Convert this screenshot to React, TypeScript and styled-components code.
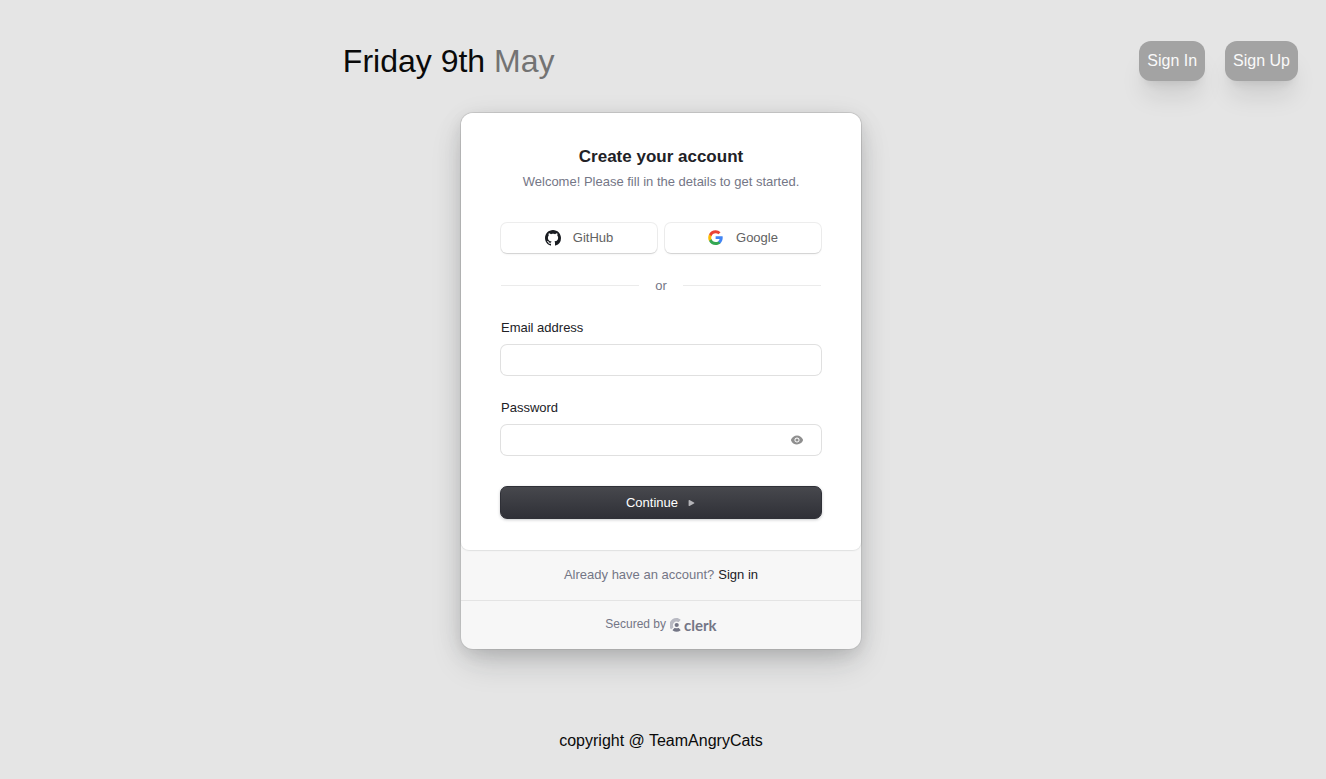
import React from "react";
import styled, { createGlobalStyle } from "styled-components";

const GlobalStyle = createGlobalStyle`
  *, *::before, *::after { box-sizing: border-box; }
  body {
    margin: 0;
    background: #e5e5e5;
    color: #0a0a0a;
    font-family: "Liberation Sans", Arial, sans-serif;
    font-size: 16px;
    line-height: 24px;
  }
  button, input { font: inherit; }
  h1, h2, p { margin: 0; }
`;

const Page = styled.div`
  display: flex;
  flex-direction: column;
  min-height: 100vh;
  padding-right: 4px;
`;

const Header = styled.header`
  display: grid;
  grid-template-columns: 2fr 1fr;
  align-items: center;
  padding: 41px 24px 32px;
`;

const DateTitle = styled.h1`
  text-align: center;
  font-size: 32px;
  line-height: 40px;
  font-weight: 400;
`;

const Month = styled.span`
  color: #737373;
`;

const HeaderActions = styled.nav`
  display: flex;
  justify-content: flex-end;
  gap: 20px;
`;

const HeaderButton = styled.button`
  padding: 8px;
  border: 0;
  border-radius: 12px;
  background: #a3a3a3;
  color: #fafafa;
  cursor: pointer;
  box-shadow: 0 20px 25px -5px rgba(0, 0, 0, 0.1), 0 8px 10px -6px rgba(0, 0, 0, 0.1);
`;

const Main = styled.main`
  display: flex;
  justify-content: center;
`;

const Card = styled.section`
  width: 100%;
  max-width: 400px;
  border-radius: 12px;
  background: #f7f7f7;
  color: #747686;
  font-size: 13px;
  line-height: 18px;
  box-shadow: 0 5px 15px rgba(0, 0, 0, 0.08), 0 15px 35px -5px rgba(25, 28, 33, 0.2),
    0 4px 32px rgba(0, 0, 0, 0.05), 0 0 0 1px rgba(0, 0, 0, 0.06);
`;

const CardBody = styled.form`
  display: flex;
  flex-direction: column;
  padding: 32px 40px;
  border-radius: 12px 12px 8px 8px;
  background: #fff;
  box-shadow: 0 1px 2px rgba(25, 28, 33, 0.06), 0 0 0 1px rgba(0, 0, 0, 0.04);
`;

const Intro = styled.div`
  display: flex;
  flex-direction: column;
  gap: 4px;
  margin-bottom: 32px;
  text-align: center;
`;

const CardTitle = styled.h2`
  color: #212126;
  font-size: 17px;
  line-height: 24px;
  font-weight: 700;
`;

const Providers = styled.div`
  display: grid;
  grid-template-columns: 1fr 1fr;
  gap: 8px;
`;

const ProviderButton = styled.button`
  display: flex;
  align-items: center;
  justify-content: center;
  gap: 12px;
  height: 30px;
  padding: 0 12px;
  border: 0;
  border-radius: 6px;
  background: #fff;
  color: #626262;
  cursor: pointer;
  box-shadow: 0 0 0 1px rgba(0, 0, 0, 0.07), 0 1px 0 rgba(0, 0, 0, 0.05),
    0 2px 3px -1px rgba(0, 0, 0, 0.08);
`;

const Divider = styled.div`
  display: flex;
  align-items: center;
  gap: 16px;
  margin: 24px 0;

  &::before, &::after {
    content: "";
    flex: 1;
    height: 2px;
    border-top: 1px solid #ebebeb;
  }
`;

const Field = styled.div`
  display: flex;
  flex-direction: column;
  gap: 8px;
  margin-bottom: 24px;
`;

const Label = styled.label`
  color: #212126;
`;

const InputFrame = styled.div`
  display: flex;
  align-items: center;
  height: 30px;
  padding-right: 4px;
  border-radius: 6px;
  background: #fff;
  box-shadow: 0 0 0 1px rgba(0, 0, 0, 0.12);
`;

const Input = styled.input`
  flex: 1;
  min-width: 0;
  height: 30px;
  padding: 0 12px;
  border: 0;
  background: transparent;
  color: #212126;
  outline: none;
`;

const RevealButton = styled.button`
  display: flex;
  align-items: center;
  justify-content: center;
  width: 40px;
  height: 24px;
  padding: 0;
  border: 0;
  background: transparent;
  color: #8f8f8f;
  cursor: pointer;
`;

const SubmitButton = styled.button`
  display: flex;
  align-items: center;
  justify-content: center;
  gap: 8px;
  height: 33px;
  margin: 7px -1px -1px;
  border: 1px solid #2f3037;
  border-radius: 7px;
  background: linear-gradient(#47484d, #2f3037);
  color: #fff;
  font-weight: 500;
  cursor: pointer;
  box-shadow: 0 1px 3px rgba(34, 42, 53, 0.25);
`;

const FooterRow = styled.div<{ $divided?: boolean }>`
  display: flex;
  align-items: center;
  justify-content: center;
  gap: 4px;
  padding: ${(p) => (p.$divided ? "14px 32px 16px" : "16px 32px")};
  border-top: ${(p) => (p.$divided ? "1px solid #e4e4e4" : "0")};
`;

const SignInLink = styled.a`
  color: #212126;
  text-decoration: none;
`;

const Secured = styled.span`
  font-size: 12px;
`;

const Brand = styled.a`
  display: flex;
  align-items: center;
  gap: 2px;
  padding-top: 2px;
  color: #747686;
  font-family: Lato, sans-serif;
  font-size: 15px;
  line-height: 16px;
  font-weight: 700;
  text-decoration: none;
`;

const Copyright = styled.footer`
  padding: 80px 24px 24px;
  text-align: center;
`;

const GitHubIcon = () => (
  <svg width="16" height="16" viewBox="0 0 16 16" fill="#191c21" aria-hidden="true">
    <path d="M8 0C3.58 0 0 3.58 0 8c0 3.54 2.29 6.53 5.47 7.59.4.07.55-.17.55-.38 0-.19-.01-.82-.01-1.49-2.01.37-2.53-.49-2.69-.94-.09-.23-.48-.94-.82-1.13-.28-.15-.68-.52-.01-.53.63-.01 1.08.58 1.23.82.72 1.21 1.87.87 2.33.66.07-.52.28-.87.51-1.07-1.78-.2-3.64-.89-3.64-3.95 0-.87.31-1.59.82-2.15-.08-.2-.36-1.02.08-2.12 0 0 .67-.21 2.2.82.64-.18 1.32-.27 2-.27s1.36.09 2 .27c1.53-1.04 2.2-.82 2.2-.82.44 1.1.16 1.92.08 2.12.51.56.82 1.27.82 2.15 0 3.07-1.87 3.75-3.65 3.95.29.25.54.73.54 1.48 0 1.07-.01 1.93-.01 2.2 0 .21.15.46.55.38A8.01 8.01 0 0 0 16 8c0-4.42-3.58-8-8-8Z" />
  </svg>
);

const GoogleIcon = () => (
  <svg width="16" height="16" viewBox="-0.4 -0.4 26 26" aria-hidden="true">
    <path fill="#4285f4" d="M23.5 12.27c0-.82-.07-1.6-.2-2.36H12v4.51h6.46a5.52 5.52 0 0 1-2.4 3.58v3h3.86c2.26-2.09 3.58-5.17 3.58-8.73Z" />
    <path fill="#34a853" d="M12 24c3.24 0 5.95-1.08 7.93-2.91l-3.86-3c-1.08.72-2.45 1.16-4.07 1.16-3.13 0-5.78-2.11-6.73-4.96H1.28v3.09A12 12 0 0 0 12 24Z" />
    <path fill="#fbbc05" d="M5.27 14.29a7.2 7.2 0 0 1 0-4.58V6.62H1.28a12 12 0 0 0 0 10.76l3.99-3.09Z" />
    <path fill="#ea4335" d="M12 4.75c1.77 0 3.35.61 4.6 1.8l3.42-3.42A11.5 11.5 0 0 0 12 0 12 12 0 0 0 1.28 6.62l3.99 3.09C6.22 6.86 8.87 4.75 12 4.75Z" />
  </svg>
);

const EyeIcon = () => (
  <svg width="16" height="16" viewBox="0 0 16 16" fill="currentColor" aria-hidden="true">
    <circle cx="8" cy="8" r="1.6" />
    <path
      fillRule="evenodd"
      d="M2.07 8.38a.962.962 0 0 1 0-.763 6.42 6.42 0 0 1 2.334-2.99A6.302 6.302 0 0 1 8 3.5c2.704 0 5.014 1.71 5.93 4.12.094.246.093.518 0 .763a6.418 6.418 0 0 1-2.334 2.99A6.301 6.301 0 0 1 8 12.5c-2.704 0-5.013-1.71-5.93-4.12ZM10.54 8c0 .682-.267 1.336-.743 1.818A2.526 2.526 0 0 1 8 10.571c-.674 0-1.32-.27-1.796-.753A2.587 2.587 0 0 1 5.459 8c0-.682.268-1.336.745-1.818A2.525 2.525 0 0 1 8 5.429c.674 0 1.32.27 1.797.753.476.482.744 1.136.744 1.818Z"
    />
  </svg>
);

const ArrowIcon = () => (
  <svg width="10" height="10" viewBox="0 0 10 10" fill="#b4b4b8" aria-hidden="true">
    <path d="M2.6 2.6c0-.5.5-.8.9-.6l4.5 2.5c.5.2.5.8 0 1L3.5 8c-.4.2-.9-.1-.9-.6V2.6Z" />
  </svg>
);

const ClerkMark = () => (
  <svg width="12" height="14" viewBox="0 0 12 14" aria-hidden="true">
    <path fill="#b9bac3" d="M10.4 2.2 8.7 3.9a.5.5 0 0 1-.6.1 3.6 3.6 0 0 0-4.8 4.8.5.5 0 0 1-.1.6l-1.7 1.7a.4.4 0 0 1-.7 0A7 7 0 0 1 6.6 0c1.4 0 2.7.6 3.8 1.5.2.2.2.5 0 .7Z" />
    <circle fill="#747686" cx="6.7" cy="7" r="2.1" />
    <path fill="#747686" d="m10.4 11.8-1.7-1.7a.5.5 0 0 0-.6-.1 3.6 3.6 0 0 1-3 0 .5.5 0 0 0-.6.1l-1.7 1.7c-.2.2-.2.5 0 .7a7 7 0 0 0 7.6 0c.2-.2.2-.5 0-.7Z" />
  </svg>
);

export default function App() {
  return (
    <Page>
      <GlobalStyle />
      <Header>
        <DateTitle>
          Friday 9th <Month>May</Month>
        </DateTitle>
        <HeaderActions aria-label="Account">
          <HeaderButton type="button">Sign In</HeaderButton>
          <HeaderButton type="button">Sign Up</HeaderButton>
        </HeaderActions>
      </Header>

      <Main>
        <Card>
          <CardBody onSubmit={(e: React.FormEvent) => e.preventDefault()}>
            <Intro>
              <CardTitle>Create your account</CardTitle>
              <p>Welcome! Please fill in the details to get started.</p>
            </Intro>
            <Providers>
              <ProviderButton type="button">
                <GitHubIcon />
                GitHub
              </ProviderButton>
              <ProviderButton type="button">
                <GoogleIcon />
                Google
              </ProviderButton>
            </Providers>
            <Divider>or</Divider>
            <Field>
              <Label htmlFor="email">Email address</Label>
              <InputFrame>
                <Input id="email" type="email" />
              </InputFrame>
            </Field>
            <Field>
              <Label htmlFor="password">Password</Label>
              <InputFrame>
                <Input id="password" type="password" />
                <RevealButton type="button" aria-label="Show password">
                  <EyeIcon />
                </RevealButton>
              </InputFrame>
            </Field>
            <SubmitButton type="submit">
              Continue
              <ArrowIcon />
            </SubmitButton>
          </CardBody>
          <FooterRow>
            <span>Already have an account?</span>
            <SignInLink href="#sign-in">Sign in</SignInLink>
          </FooterRow>
          <FooterRow $divided>
            <Secured>Secured by</Secured>
            <Brand href="#clerk">
              <ClerkMark />
              clerk
            </Brand>
          </FooterRow>
        </Card>
      </Main>

      <Copyright>copyright @ TeamAngryCats</Copyright>
    </Page>
  );
}
